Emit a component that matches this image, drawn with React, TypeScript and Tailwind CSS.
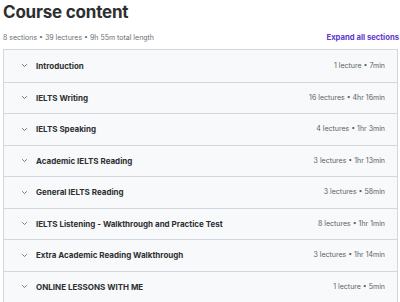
import React from "react";

const sections = [
  ["Introduction", "1 lecture • 7min"],
  ["IELTS Writing", "16 lectures • 4hr 16min"],
  ["IELTS Speaking", "4 lectures • 1hr 3min"],
  ["Academic IELTS Reading", "3 lectures • 1hr 13min"],
  ["General IELTS Reading", "3 lectures • 58min"],
  ["IELTS Listening - Walkthrough and Practice Test", "8 lectures • 1hr 1min"],
  ["Extra Academic Reading Walkthrough", "3 lectures • 1hr 14min"],
  ["ONLINE LESSONS WITH ME", "1 lecture • 5min"],
];

function Chevron() {
  return (
    <svg width="7" height="7" viewBox="0 0 10 10" className="text-[#6a6f73]">
      <path d="M2 3.5 L5 6.5 L8 3.5" fill="none" stroke="currentColor" strokeWidth="1.3" strokeLinecap="round" strokeLinejoin="round" />
    </svg>
  );
}

export default function App() {
  return (
    <div className="w-[400px] h-[302px] overflow-hidden bg-white text-[#2d2f31] pl-[3px]" style={{ fontFamily: "Inter, 'Noto Sans', sans-serif" }}>
      <div className="pt-[2px] h-[28px] text-[17px] font-bold leading-[20px] tracking-[-0.2px]">Course content</div>
      <div className="flex items-center justify-between h-[20px]">
        <span className="text-[7px] text-[#6a6f73]">8 sections • 39 lectures • 9h 55m total length</span>
        <span className="text-[7.7px] font-bold text-[#6236d0] pr-[1px]">Expand all sections</span>
      </div>
      <div className="w-[395px] border border-[#d1d7dc] mt-[1px]">
        {sections.map(([t, m], i) => (
          <div key={i} className={"flex items-center h-[31.5px] bg-[#f7f9fa] pl-[17px] pr-[12px] " + (i > 0 ? "border-t border-[#d1d7dc]" : "")}>
            <Chevron />
            <span className="ml-[8px] text-[8px] font-bold flex-1 text-[#2d2f31]">{t}</span>
            <span className="text-[7px] text-[#5a5f63]">{m}</span>
          </div>
        ))}
      </div>
    </div>
  );
}
